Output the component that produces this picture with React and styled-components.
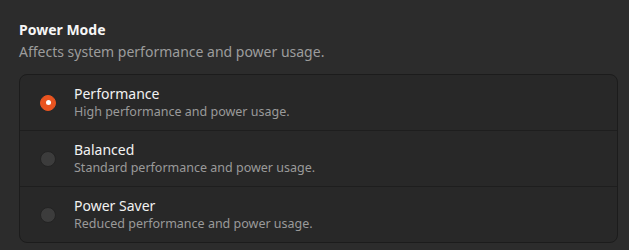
import React, { useState } from "react";
import styled, { createGlobalStyle } from "styled-components";

const GlobalStyle = createGlobalStyle`
  html, body {
    margin: 0;
    padding: 0;
    background: #2c2c2c;
  }
  body {
    font-family: "Noto Sans", "DejaVu Sans", sans-serif;
    -webkit-font-smoothing: antialiased;
  }
`;

const modes = [
  { id: "performance", title: "Performance", desc: "High performance and power usage." },
  { id: "balanced", title: "Balanced", desc: "Standard performance and power usage." },
  { id: "saver", title: "Power Saver", desc: "Reduced performance and power usage." },
];

const App = () => {
  const [selected, setSelected] = useState("performance");
  return (
    <>
      <GlobalStyle />
      <Page>
        <Heading>Power Mode</Heading>
        <Subtitle>Affects system performance and power usage.</Subtitle>
        <Card>
          {modes.map((item) => (
            <Row key={item.id} onClick={() => setSelected(item.id)}>
              <Radio checked={selected === item.id} />
              <Texts>
                <RowTitle>{item.title}</RowTitle>
                <RowDesc>{item.desc}</RowDesc>
              </Texts>
            </Row>
          ))}
        </Card>
      </Page>
    </>
  );
};

export default App;

const Page = styled.div`
  width: 629px;
  height: 250px;
  box-sizing: border-box;
  padding: 20px 11px 0 19px;
`;

const Heading = styled.h2`
  margin: 0;
  font-size: 14px;
  font-weight: 700;
  color: #f6f6f6;
  line-height: 20px;
`;

const Subtitle = styled.p`
  margin: 2px 0 0;
  font-size: 14px;
  color: #9c9c9c;
  line-height: 20px;
`;

const Card = styled.section`
  margin-top: 12px;
  background: #282828;
  border: 1px solid #1c1c1c;
  border-radius: 8px;
  overflow: hidden;
`;

const Row = styled.div`
  display: flex;
  align-items: center;
  height: 55px;
  padding-left: 20px;
  cursor: pointer;
  & + & {
    border-top: 1px solid #1e1e1e;
  }
`;

const Radio = styled.span`
  flex: none;
  width: 16px;
  height: 16px;
  border-radius: 50%;
  box-sizing: border-box;
  background: ${(p) => (p.checked ? "#e95420" : "#3c3c3c")};
  border: 1px solid ${(p) => (p.checked ? "#e95420" : "#232323")};
  display: flex;
  align-items: center;
  justify-content: center;
  &::after {
    content: "";
    width: 5px;
    height: 5px;
    border-radius: 50%;
    background: #ffffff;
    display: ${(p) => (p.checked ? "block" : "none")};
  }
`;

const Texts = styled.div`
  margin-left: 18px;
  margin-top: -1px;
  display: flex;
  flex-direction: column;
`;

const RowTitle = styled.span`
  font-size: 14px;
  color: #f2f2f2;
  line-height: 19px;
`;

const RowDesc = styled.span`
  font-size: 12.5px;
  color: #9a9a9a;
  line-height: 18px;
`;
